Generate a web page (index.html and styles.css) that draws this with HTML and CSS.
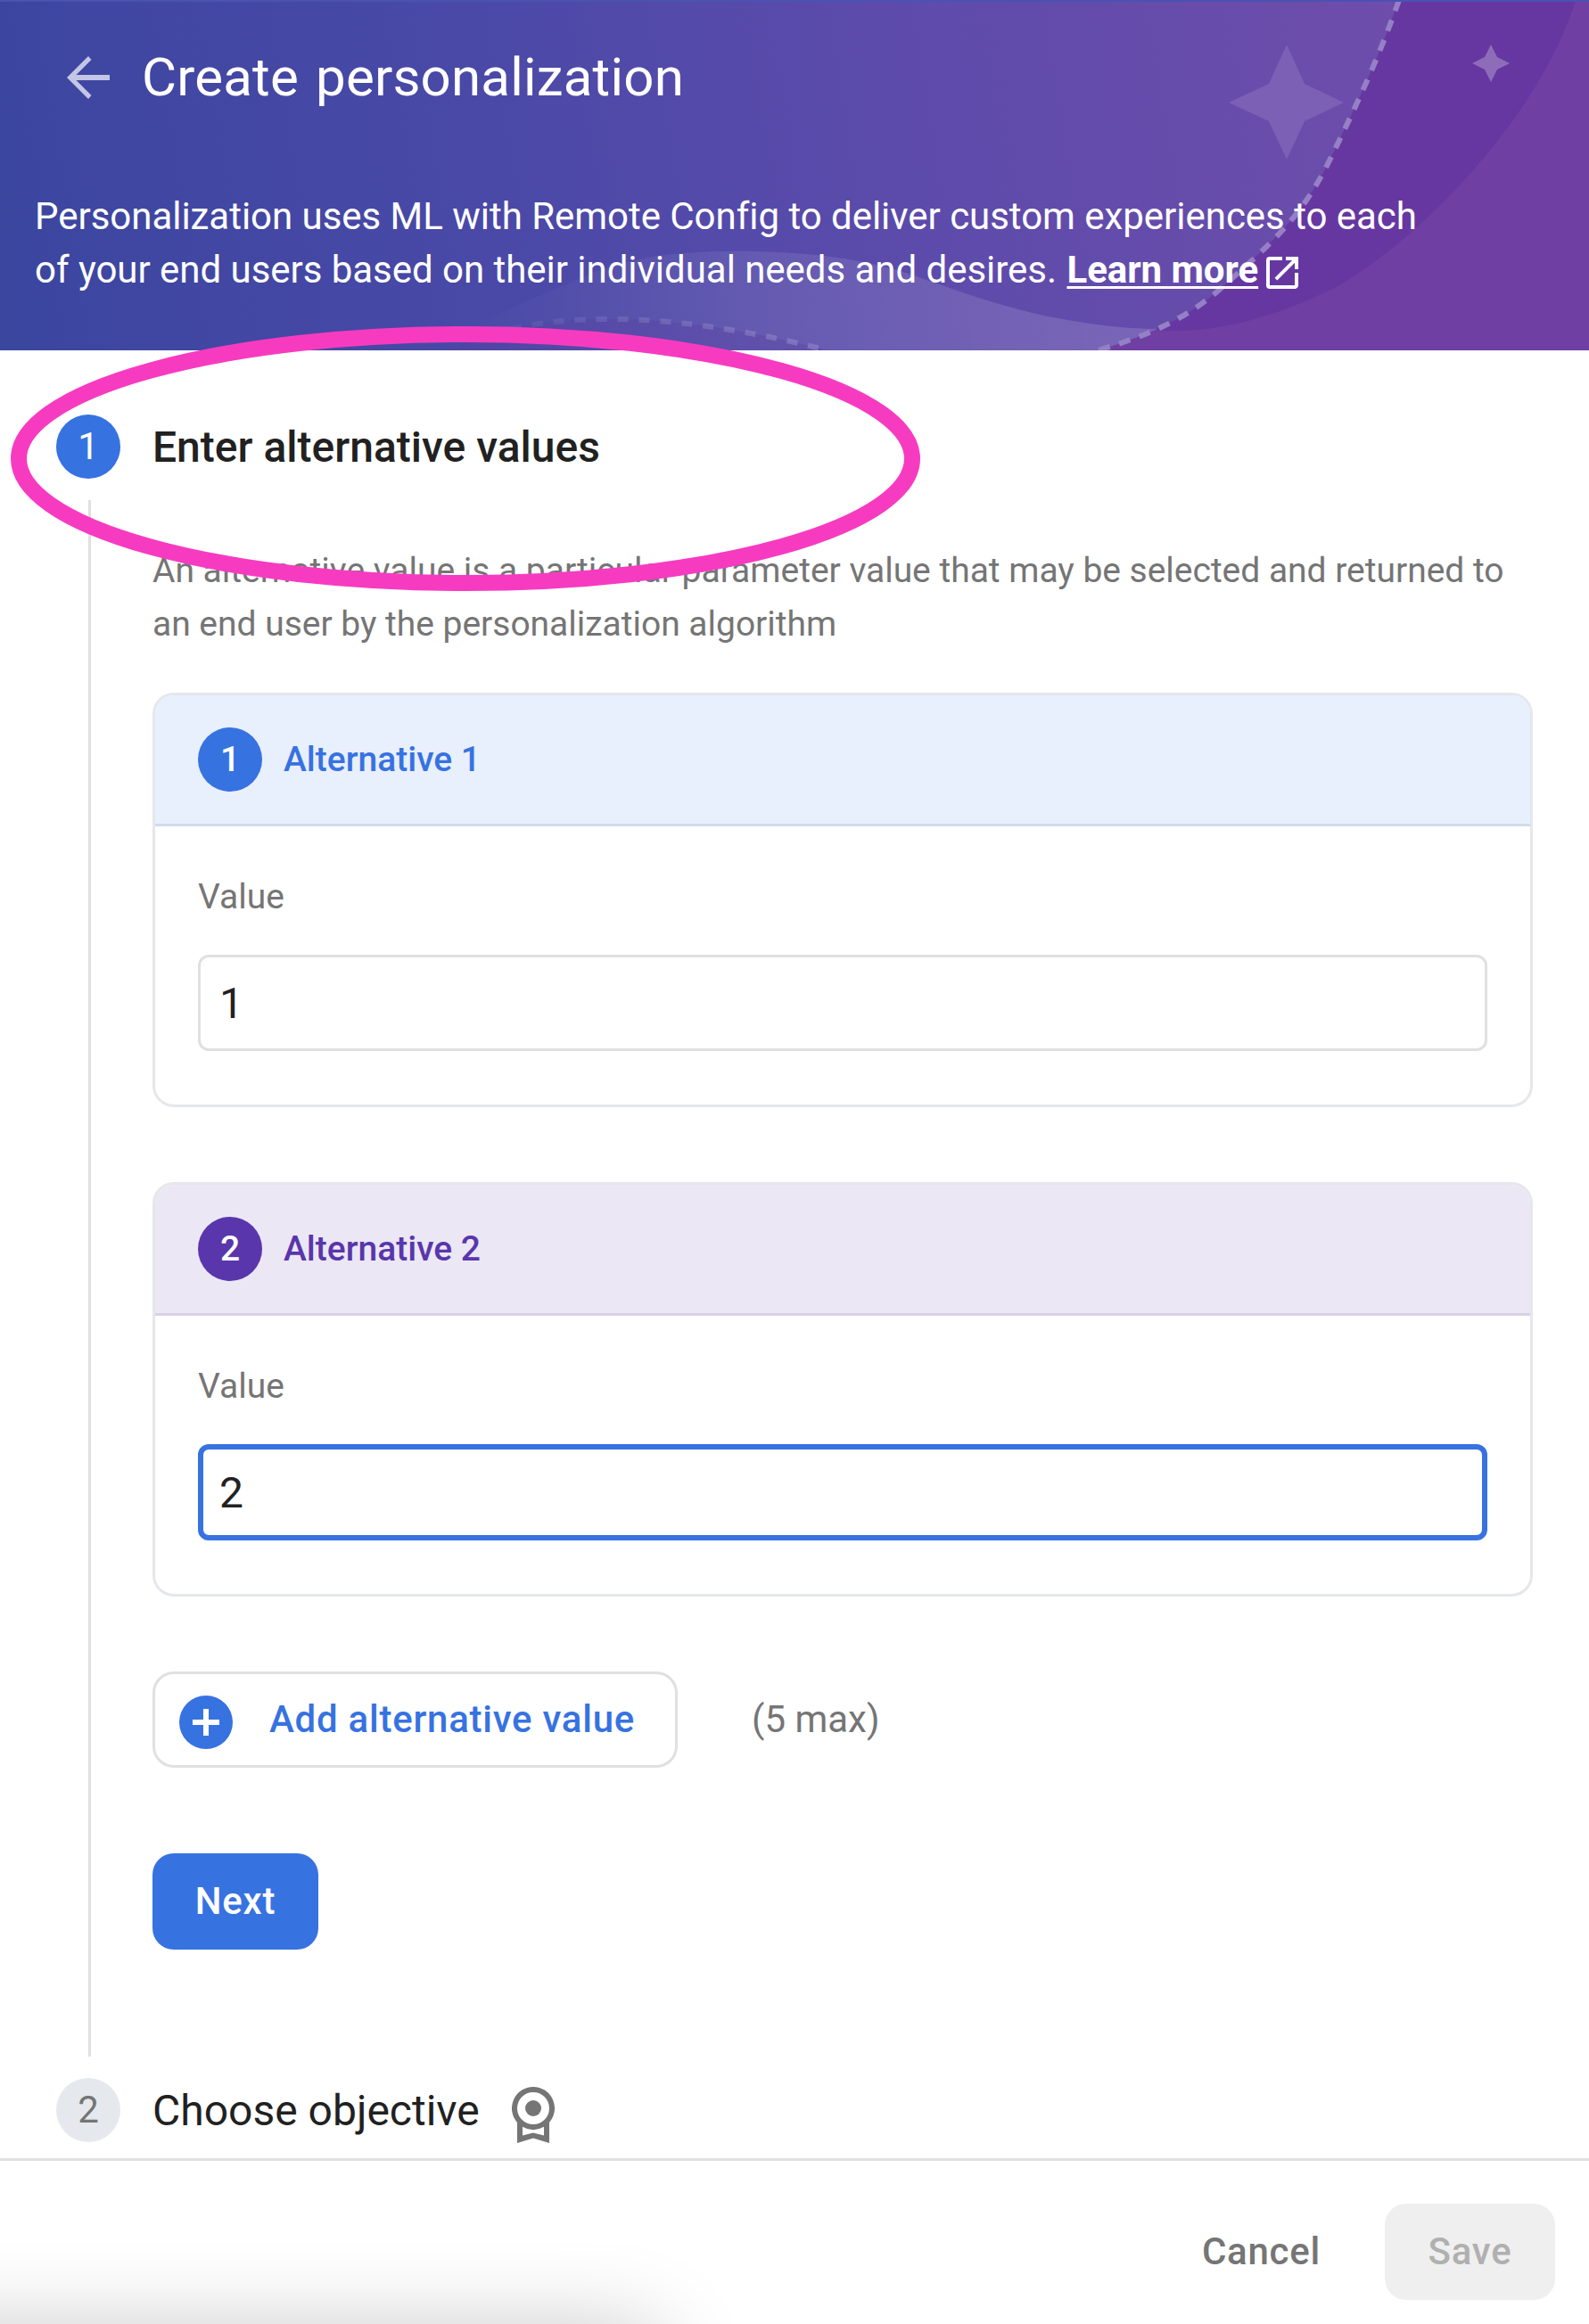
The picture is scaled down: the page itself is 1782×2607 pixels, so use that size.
FILE: index.html
```html
<!DOCTYPE html>
<html lang="en">
<head>
<meta charset="utf-8">
<title>Create personalization</title>
<link rel="stylesheet" href="styles.css">
</head>
<body>
<div class="page">
  <header class="hero">
    <svg class="hero-art" viewBox="0 0 1782 393" aria-hidden="true">
      <defs>
        <linearGradient id="g-main" gradientUnits="userSpaceOnUse" x1="0" y1="260" x2="1560" y2="0">
          <stop offset="0" stop-color="#3b469f"/>
          <stop offset=".35" stop-color="#4a49a7"/>
          <stop offset=".65" stop-color="#5d4bab"/>
          <stop offset="1" stop-color="#6e4dab"/>
        </linearGradient>
        <linearGradient id="g-hill" gradientUnits="userSpaceOnUse" x1="520" y1="0" x2="1240" y2="0">
          <stop offset="0" stop-color="#fff" stop-opacity="0"/>
          <stop offset=".45" stop-color="#fff" stop-opacity=".09"/>
          <stop offset="1" stop-color="#fff" stop-opacity=".14"/>
        </linearGradient>
        <linearGradient id="g-dash" gradientUnits="userSpaceOnUse" x1="500" y1="0" x2="900" y2="0">
          <stop offset="0" stop-color="#8f84c9" stop-opacity="0"/>
          <stop offset=".5" stop-color="#8f84c9" stop-opacity=".35"/>
          <stop offset="1" stop-color="#9a8bcb" stop-opacity=".55"/>
        </linearGradient>
      </defs>
      <rect width="1782" height="393" fill="url(#g-main)"/>
      <path d="M470 393C560 350 610 330 660 308C720 283 790 281 850 282C910 284 970 290 1025 309C1100 336 1150 352 1210 361C1240 366 1270 369 1300 369L1240 393Z" fill="url(#g-hill)"/>
      <path d="M500 393C600 348 740 345 928 393Z" fill="#5a3fa0" fill-opacity=".35"/>
      <path d="M1569 0C1548 60 1524 113 1490 182C1460 242 1430 270 1364 328C1325 360 1290 375 1232 393H1782V0Z" fill="#6f3fa4"/>
      <path d="M1569 0C1548 60 1524 113 1490 182C1460 242 1430 270 1364 328C1340 348 1320 359 1296 370C1350 375 1420 362 1502 320C1610 255 1730 120 1767 0Z" fill="#6637a1"/>
      <path d="M1569 0C1548 60 1524 113 1490 182C1460 242 1430 270 1364 328C1325 360 1290 375 1232 393" class="dash"/>
      <path d="M505 391C600 348 740 345 928 393" class="dash-soft"/>
      <path d="M1443 50L1463 94L1507 115L1463 136L1443 179L1423 136L1378 115L1423 94Z" fill="#7c60b5"/>
      <path d="M1672 50L1679 64L1693 71L1679 78L1672 92L1665 78L1651 71L1665 64Z" fill="#8e6cb9"/>
      <rect width="1782" height="2" fill="#4a52b2"/>
    </svg>
    <div class="hero-content">
      <div class="title-row">
        <svg class="back" viewBox="0 0 48 48"><path d="M24 0L27.5 4L10.5 21H48V27H10.5L27.5 44L24 48L0 24Z" fill="#c3c6e6"/></svg>
        <h1 class="title">Create personalization</h1>
      </div>
      <p class="intro">Personalization uses ML with Remote Config to deliver custom experiences to each<br>of your end users based on their individual needs and desires. <a class="learn">Learn more</a><svg class="ext" viewBox="3 3 18 18"><path d="M19 19H5V5h7V3H5a2 2 0 0 0-2 2v14a2 2 0 0 0 2 2h14c1.100 0 2-.9 2-2v-7h-2v7zM14 3v2h3.590l-9.830 9.830 1.410 1.410L19 6.410V10h2V3h-7z" fill="#fff"/></svg></p>
    </div>
  </header>

  <main class="stepper">
    <section class="step">
      <div class="rail"><span class="badge badge-blue thin">1</span><span class="line"></span></div>
      <div class="step-body">
        <h2 class="step-title active">Enter alternative values</h2>
        <p class="desc">An alternative value is a particular parameter value that may be selected and returned to<br>an end user by the personalization algorithm</p>
        <div class="card card-blue">
          <div class="card-head"><span class="badge badge-blue">1</span><span>Alternative 1</span></div>
          <div class="card-body"><label class="label">Value</label><div class="input">1</div></div>
        </div>
        <div class="card card-purple">
          <div class="card-head"><span class="badge badge-purple">2</span><span>Alternative 2</span></div>
          <div class="card-body"><label class="label">Value</label><div class="input focused">2</div></div>
        </div>
        <div class="add-row">
          <button class="add"><svg class="plus" viewBox="0 0 60 60"><circle cx="30" cy="30" r="30" fill="#3772e1"/><path d="M27 15h6v12h12v6H33v12h-6V33H15v-6h12z" fill="#fff"/></svg><span>Add alternative value</span></button>
          <span class="max">(5 max)</span>
        </div>
        <button class="next">Next</button>
      </div>
    </section>
    <section class="step second">
      <div class="rail"><span class="badge badge-grey">2</span></div>
      <h2 class="step-title">Choose objective</h2>
      <svg class="award" viewBox="0 0 48 63"><path fill-rule="evenodd" d="M24 0a24 24 0 0 1 18 39.900V63L24 57.500L6 63V39.900A24 24 0 0 1 24 0zM24 6a18 18 0 1 0 0 36a18 18 0 0 0 0-36zM12 44.800V54.500L24 51.500L36 54.500V44.800A24 24 0 0 1 12 44.800z" fill="#757575"/><circle cx="24" cy="24" r="9" fill="#757575"/></svg>
    </section>
  </main>

  <footer class="footer">
    <button class="cancel">Cancel</button>
    <button class="save">Save</button>
  </footer>
  <svg class="highlight" viewBox="0 0 1020 298"><ellipse cx="510" cy="148.500" rx="501" ry="139.500" fill="none" stroke="#f73bc1" stroke-width="18"/></svg>
</div>
</body>
</html>
```

FILE: styles.css
```css
* { box-sizing: border-box; }
body { margin: 0; background: #fff; font-family: Roboto, "Liberation Sans", sans-serif; color: #212121; }
h1, h2, p { margin: 0; }
button { font-family: inherit; border: 0; background: none; padding: 0; }
svg { display: block; }

.page { position: relative; width: 1782px; height: 2607px; display: flex; flex-direction: column; overflow: hidden; }

.hero { position: relative; height: 393px; flex: none; color: #fff; }
.hero-art { position: absolute; inset: 0; width: 1782px; height: 393px; }
.dash { fill: none; stroke: #9580c5; stroke-width: 6; stroke-dasharray: 13 11; }
.dash-soft { fill: none; stroke: url(#g-dash); stroke-width: 6; stroke-dasharray: 12 12; }
.hero-content { position: relative; padding: 51px 0 0 39px; }
.title-row { display: flex; align-items: center; height: 72px; padding-left: 36px; }
.back { width: 48px; height: 48px; }
.title { margin-left: 36px; font-size: 60px; line-height: 72px; font-weight: 400; letter-spacing: 0.2px; word-spacing: 4px; white-space: nowrap; }
.intro { margin-top: 90px; font-size: 42px; line-height: 60px; letter-spacing: -0.03px; white-space: nowrap; }
.learn { margin-left: 1px; font-weight: 700; text-decoration: underline; text-decoration-thickness: 3px; text-underline-offset: 4px; text-decoration-skip-ink: none; }
.ext { display: inline-block; width: 36px; height: 36px; margin-left: 9px; vertical-align: -7px; }

.stepper { height: 2028px; flex: none; padding: 72px 63px 0; }
.step { display: flex; height: 1866px; }
.rail { width: 108px; flex: none; display: flex; flex-direction: column; }
.line { width: 3px; height: 1746px; margin: 24px 0 0 36px; background: #e0e0e0; }
.badge { width: 72px; height: 72px; flex: none; border-radius: 50%; display: flex; align-items: center; justify-content: center; font-size: 39px; font-weight: 500; color: #fff; }
.badge-blue { background: #3772e1; }
.badge-purple { background: #5936ab; }
.badge-grey { background: #e5e9ee; color: #757575; font-weight: 400; font-size: 42px; padding-bottom: 1px; }
.thin { font-weight: 400; font-size: 42px; padding-bottom: 1px; }
.step-body { width: 1548px; display: flex; flex-direction: column; align-items: flex-start; }
.step-title { font-size: 48px; line-height: 72px; padding-top: 1px; font-weight: 400; white-space: nowrap; }
.step-title.active { font-weight: 500; }
.desc { margin-top: 72px; font-size: 39px; line-height: 60px; letter-spacing: -0.02px; color: #757575; white-space: nowrap; }

.card { width: 1548px; height: 465px; border: 3px solid #e5e7eb; border-radius: 24px; overflow: hidden; }
.card-blue { margin-top: 47px; }
.card-purple { margin-top: 84px; }
.card-head { height: 147px; display: flex; align-items: center; gap: 24px; padding-left: 48px; border-bottom: 3px solid #d1dcea; font-size: 39px; line-height: 48px; font-weight: 500; }
.card-blue .card-head { background: #e8effd; color: #3772e1; }
.card-purple .card-head { background: #ebe7f5; color: #5936ab; border-color: #d7d2e4; }
.card-body { padding: 49px 48px 0; display: flex; flex-direction: column; }
.label { height: 60px; line-height: 60px; font-size: 39px; color: #757575; }
.input { height: 108px; margin-top: 35px; border: 3px solid #e0e0e0; border-radius: 12px; padding-left: 21px; font-size: 48px; line-height: 103px; }
.input.focused { border: 6px solid #3772e1; padding-left: 18px; line-height: 97px; }

.add-row { display: flex; align-items: center; margin-top: 84px; }
.add { width: 589px; height: 108px; border: 3px solid #e0e0e0; border-radius: 24px; display: flex; align-items: center; padding-left: 27px; color: #3772e1; font-size: 42px; font-weight: 500; letter-spacing: 0.75px; white-space: nowrap; }
.add span { margin-bottom: 2px; }
.plus { width: 60px; height: 60px; margin: 6px 41px 0 0; }
.max { margin: 0 0 2px 83px; font-size: 42px; color: #757575; }
.next { margin-top: 96px; width: 186px; height: 108px; padding-bottom: 2px; border-radius: 24px; background: #3772e1; color: #fff; font-size: 42px; font-weight: 500; letter-spacing: 0.75px; }

.step.second { height: 90px; }
.award { width: 48px; height: 63px; margin: 10px 0 0 36px; }

.footer { position: relative; flex: 1; border-top: 3px solid #e0e0e0; display: flex; justify-content: flex-end; padding: 48px 38px 0 0; gap: 72px; overflow: hidden; }
/* soft shadow cast by the panel docked below the viewport */
.footer::after { content: ""; position: absolute; left: -200px; top: 191px; width: 935px; height: 300px; box-shadow: 0 0 100px rgba(0, 0, 0, .23); }
.cancel, .save { height: 108px; padding-bottom: 2px; font-size: 42px; font-weight: 500; letter-spacing: 0.75px; color: #757575; }
.save { width: 191px; border-radius: 24px; background: #efefef; color: #b0b0b0; }

.highlight { position: absolute; left: 12px; top: 366px; width: 1020px; height: 298px; }
```
